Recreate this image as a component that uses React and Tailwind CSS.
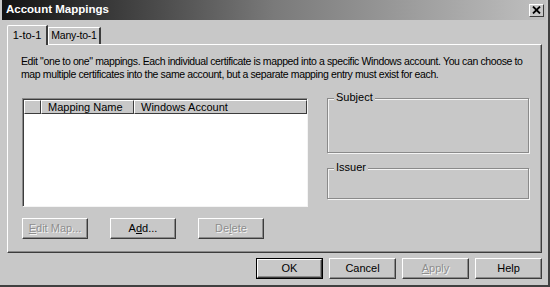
import React from "react";

const font = { fontFamily: '"Liberation Sans", Arial, sans-serif' };

function Btn({ children, disabled, w = "w-[66px]", h = "h-[21px]" }) {
  return (
    <div
      className={`${w} ${h} flex items-center justify-center border border-t-white border-l-white border-r-[#3c3c3c] border-b-[#3c3c3c] shadow-[inset_-1px_-1px_#8a8a8a] text-[11px] whitespace-nowrap ${
        disabled ? "text-[#8e8e8e] [text-shadow:1px_1px_#f4f4f4]" : "text-black"
      }`}
    >
      {children}
    </div>
  );
}

function Group({ label, className }) {
  return (
    <div className={`relative border border-[#8a8a8a] shadow-[inset_1px_1px_#f4f4f4,1px_1px_#f4f4f4] ${className}`}>
      <span className="absolute -top-[8px] left-[6px] px-[2px] bg-[#c8c8c8] text-[11px] leading-[13px] text-black">
        {label}
      </span>
    </div>
  );
}

export default function App() {
  return (
    <div style={font} className="w-[550px] h-[287px] bg-[#c8c8c8] overflow-hidden flex flex-col border-r-2 border-b-2 border-r-[#404040] border-b-[#404040]">
      {/* Title bar */}
      <div className="h-[20px] mx-[2px] flex items-center justify-between bg-gradient-to-r from-[#141414] via-[#7a7a7a] to-[#c0c0c0] pl-[4px] pr-[2px]">
        <span className="text-white font-bold text-[11.5px] leading-none">Account Mappings</span>
        <div className="w-[15px] h-[13px] bg-[#c8c8c8] border border-t-white border-l-white border-r-[#3c3c3c] border-b-[#3c3c3c] flex items-center justify-center">
          <svg width="9" height="8" viewBox="0 0 9 8">
            <path d="M1 0.5 L8 7.5 M8 0.5 L1 7.5" stroke="black" strokeWidth="1.8" />
          </svg>
        </div>
      </div>

      {/* Tabs */}
      <div className="ml-[7px] mt-[4px] flex items-end h-[20px] relative z-10">
        <div className="h-[20px] w-[41px] -mb-px bg-[#c8c8c8] border-t border-l border-t-white border-l-white border-r-2 border-r-[#3c3c3c] flex items-center justify-center text-[11px] whitespace-nowrap rounded-tl-[2px]">
          1-to-1
        </div>
        <div className="h-[17px] w-[53px] bg-[#c8c8c8] border-t border-l border-t-white border-l-white border-r-2 border-r-[#3c3c3c] flex items-center justify-center text-[10.5px] tracking-[-0.2px] whitespace-nowrap">
          Many-to-1
        </div>
      </div>

      {/* Panel */}
      <div className="ml-[7px] w-[535px] h-[209px] border border-t-white border-l-white border-r-[#3c3c3c] border-b-[#3c3c3c] shadow-[inset_-1px_-1px_#8a8a8a] pl-[13px] pt-[10px]">
        <p className="text-[10.5px] leading-[13px] text-black tracking-[-0.38px] whitespace-nowrap">
          Edit "one to one" mappings. Each individual certificate is mapped into a specific Windows account. You can choose to
          <br />
          map multiple certificates into the same account, but a separate mapping entry must exist for each.
        </p>
        <div className="flex mt-[17px] ml-px">
          <div className="flex flex-col">
            <div className="w-[286px] h-[109px] bg-white border border-t-[#8a8a8a] border-l-[#8a8a8a] border-r-[#f4f4f4] border-b-[#f4f4f4] shadow-[inset_1px_1px_#3c3c3c]">
              <div className="flex h-[14px] ml-px mt-px text-[11px] leading-[12px]">
                <div className="w-[17px] bg-[#c8c8c8] border border-t-white border-l-white border-r-[#3c3c3c] border-b-[#3c3c3c]" />
                <div className="w-[93px] bg-[#c8c8c8] border border-t-white border-l-white border-r-[#3c3c3c] border-b-[#3c3c3c] pl-[6px] whitespace-nowrap">
                  Mapping Name
                </div>
                <div className="flex-1 bg-[#c8c8c8] border border-t-white border-l-white border-r-[#3c3c3c] border-b-[#3c3c3c] pl-[6px] whitespace-nowrap">
                  Windows Account
                </div>
              </div>
            </div>
            <div className="flex gap-[22px] mt-[11px]">
              <Btn disabled>
                <span><u>E</u>dit Map...</span>
              </Btn>
              <Btn>
                <span>A<u>d</u>d...</span>
              </Btn>
              <Btn disabled>
                <span>De<u>l</u>ete</span>
              </Btn>
            </div>
          </div>
          <div className="ml-[19px] flex flex-col">
            <Group label="Subject" className="w-[202px] h-[55px]" />
            <Group label="Issuer" className="w-[202px] h-[31px] mt-[15px]" />
          </div>
        </div>
      </div>

      {/* Bottom buttons */}
      <div className="flex justify-end gap-[6px] pr-[6px] mt-[5px]">
        <div className="w-[67px] h-[21px] border border-black flex">
          <Btn w="w-[65px]" h="h-[19px]">OK</Btn>
        </div>
        <Btn w="w-[67px]">Cancel</Btn>
        <Btn w="w-[67px]" disabled>
          <span><u>A</u>pply</span>
        </Btn>
        <Btn w="w-[67px]">Help</Btn>
      </div>
    </div>
  );
}
